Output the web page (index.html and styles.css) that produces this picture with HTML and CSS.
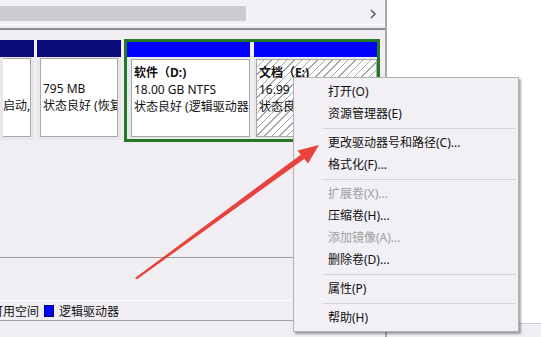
FILE: index.html
```html
<!DOCTYPE html>
<html lang="zh-CN">

<head>
  <meta charset="UTF-8">
  <title>磁盘管理</title>
  <link rel="stylesheet" href="styles.css">
</head>

<body>
  <div class="screen">
    <div class="window">
      <div class="hscroll">
        <div class="thumb"></div>
        <svg class="scroll-arrow" width="7" height="10" viewBox="0 0 7 10">
          <path d="M1 1 L5 5 L1 9" fill="none" stroke="#606060" stroke-width="1.6"/>
        </svg>
      </div>
      <div class="divider"></div>

      <div class="disk-row">
        <div class="part primary p1">
          <div class="bar"></div>
          <div class="cell">
            <div class="box">
              <div class="line">&nbsp;</div>
              <div class="line">&nbsp;</div>
              <div class="line">启动,</div>
            </div>
          </div>
        </div>
        <div class="part primary p2">
          <div class="bar"></div>
          <div class="cell">
            <div class="box">
              <div class="line">&nbsp;</div>
              <div class="line">795 MB</div>
              <div class="line">状态良好 (恢复分区)</div>
            </div>
          </div>
        </div>

        <!-- extended partition -->
        <div class="extended">
          <div class="part logical pd">
            <div class="bar"></div>
            <div class="cell">
              <div class="box">
                <div class="line label">软件（D:)</div>
                <div class="line">18.00 GB NTFS</div>
                <div class="line">状态良好 (逻辑驱动器)</div>
              </div>
            </div>
          </div>
          <div class="part logical pe selected">
            <div class="bar"></div>
            <div class="cell">
              <div class="box">
                <div class="line label">文档（E:)</div>
                <div class="line">16.99 GB NTFS</div>
                <div class="line">状态良好 (逻辑驱动器)</div>
              </div>
            </div>
          </div>
        </div>
      </div>

      <div class="empty"></div>

      <div class="legend">
        <span class="legend-cut">可用空间</span>
        <span class="swatch"></span>
        <span>逻辑驱动器</span>
      </div>
    </div>
    <div class="desktop">
      <div class="desktop-bottom"></div>
    </div>
  </div>

  <!-- Context menu -->
  <ul class="menu">
    <li>打开(O)</li>
    <li>资源管理器(E)</li>
    <li class="sep"></li>
    <li>更改驱动器号和路径(C)...</li>
    <li>格式化(F)...</li>
    <li class="sep"></li>
    <li class="disabled">扩展卷(X)...</li>
    <li>压缩卷(H)...</li>
    <li class="disabled">添加镜像(A)...</li>
    <li>删除卷(D)...</li>
    <li class="sep"></li>
    <li>属性(P)</li>
    <li class="sep"></li>
    <li>帮助(H)</li>
  </ul>

  <!-- Red annotation arrow -->
  <svg class="annotation" width="541" height="337" viewBox="0 0 541 337">
    <polygon points="135,278 301,154.5 304.5,158.8 137,279.2" fill="#e8423c"/>
    <polygon points="319,145 297.5,150.5 308,163.5" fill="#e8423c"/>
  </svg>
</body>

</html>
```

FILE: styles.css
```css
body {
  margin: 0;
  padding: 0;
  width: 541px;
  height: 337px;
  overflow: hidden;
  background-color: #fff;
  font-family: "Noto Sans", "Noto Sans CJK SC", sans-serif;
  font-size: 12px;
  color: #111;
}

.screen {
  display: flex;
  height: 337px;
}

.window {
  width: 385px;
  height: 337px;
  flex-shrink: 0;
  background-color: #f0eef2;
  border-right: 2px solid #a9a8ab;
  overflow: hidden;
}

.desktop {
  flex: 1;
  background-color: #fff;
  display: flex;
  flex-direction: column;
  justify-content: flex-end;
}

.desktop-bottom {
  height: 13px;
  background-color: #f0eef2;
  border-top: 1px solid #cfcdd1;
}

/* Horizontal scroll bar */
.hscroll {
  height: 25px;
  border-bottom: 1px solid #fff;
  box-sizing: border-box;
  padding-top: 6px;
  display: flex;
  align-items: flex-start;
  background-color: #f3f1f5;
}

.hscroll .thumb {
  width: 246px;
  height: 15px;
  background-color: #cdcbcf;
}

.hscroll .scroll-arrow {
  margin-left: 124px;
  margin-top: 3px;
}

.divider {
  height: 2px;
  margin-top: 3px;
  background-color: #8e8d90;
}

/* Disk partitions */
.disk-row {
  display: flex;
  align-items: flex-start;
  margin-top: 9px;
  height: 103px;
}

.part {
  display: flex;
  flex-direction: column;
  flex-shrink: 0;
  overflow: hidden;
}

.primary {
  margin-top: 1px;
  margin-right: 3px;
}

.primary .bar {
  height: 17px;
  background-color: #0a0a78;
}

.p1 {
  width: 34px;
}

.p2 {
  width: 84px;
}

.cell {
  height: 83px;
  box-sizing: border-box;
  padding: 1px 3px 3px 3px;
  background-color: #e9e7eb;
  display: flex;
  flex-direction: column;
}

.box {
  flex: 1;
  background-color: #fff;
  border: 1px solid #a9a9a9;
  padding: 4px 0 0 2px;
}

.p1 .box {
  border-left: none;
  padding-left: 0;
}

.line {
  height: 17px;
  line-height: 17px;
  white-space: nowrap;
  overflow: hidden;
}

.label {
  font-weight: bold;
}

.extended {
  display: flex;
  border: 3px solid #237a23;
  height: 97px;
  width: 250px;
}

.logical .bar {
  height: 15px;
  background-color: #0000fe;
}

.logical .cell {
  height: 82px;
  padding: 2px 0 2px 4px;
}

.pd {
  width: 123px;
  margin-right: 4px;
}

.pe {
  flex: 1;
  flex-shrink: 1;
}

.selected .cell {
  padding: 2px 0 2px 2px;
}

.selected .box {
  background: repeating-linear-gradient(135deg, #fff 0 4.4px, #a4a4a4 4.4px 5.4px);
}

.empty {
  height: 115px;
  border-bottom: 1px solid #9c9b9e;
}

/* Legend */
.legend {
  margin-top: 42px;
  height: 19px;
  border-top: 1px solid #fff;
  border-bottom: 1px solid #a3a2a5;
  display: flex;
  align-items: center;
  gap: 5px;
  white-space: nowrap;
}

.legend-cut {
  margin-left: -9px;
}

.swatch {
  width: 8px;
  height: 10px;
  background-color: #0000fe;
  border: 1px solid #00007a;
}

/* Context menu */
.menu {
  position: absolute;
  left: 293px;
  top: 77px;
  width: 220px;
  margin: 0;
  padding: 3px 2px 2px 2px;
  list-style: none;
  background-color: #f2f0f4;
  border: 1px solid #b2b1b4;
  box-shadow: 2px 2px 2px rgba(0, 0, 0, 0.35);
}

.menu li {
  height: 22px;
  line-height: 22px;
  padding-left: 32px;
  white-space: nowrap;
  color: #111;
}

.menu li.disabled {
  color: #9e9da0;
}

.menu li.sep {
  height: 7px;
  padding: 0;
  margin-left: 27px;
  position: relative;
}

.menu li.sep::after {
  content: "";
  position: absolute;
  left: 0;
  right: 0;
  top: 3px;
  height: 1px;
  background-color: #d4d2d6;
}

.annotation {
  position: absolute;
  left: 0;
  top: 0;
  pointer-events: none;
}
```
